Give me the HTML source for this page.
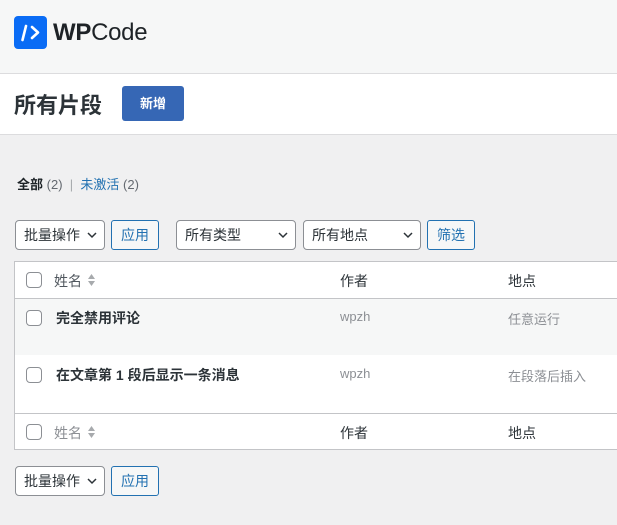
<!DOCTYPE html>
<html><head><meta charset="utf-8"><style>
*{box-sizing:border-box;margin:0;padding:0}
body{width:617px;height:525px;overflow:hidden;background:#f0f0f1;font-family:"Liberation Sans","Noto Sans CJK SC",sans-serif;font-size:13px;color:#3c434a;position:relative}
.abs{position:absolute}
.top{left:0;top:0;width:617px;height:74px;background:#f6f7f7;border-bottom:1px solid #dcdcde}
.band{left:0;top:74px;width:617px;height:61px;background:#fff;border-bottom:1px solid #dcdcde}
.sel{position:absolute;height:30px;border:1px solid #8c8f94;border-radius:4px;background:#fff;font-size:14px;color:#2c3338;line-height:28px;padding-left:8px}
.sel svg{position:absolute;right:7px;top:10px}
.btn{position:absolute;height:30px;border:1px solid #2271b1;border-radius:3px;background:#f6f7f7;color:#2271b1;font-size:14px;line-height:28px;text-align:center}
.cb{position:absolute;width:16px;height:16px;border:1px solid #8c8f94;border-radius:4px;background:#fff}
.tbl{left:14px;top:261px;width:610px;height:189px;border:1px solid #c3c4c7;background:#fff}
.t{position:absolute;white-space:nowrap}
</style></head><body>
<div class="abs top"></div>
<svg class="abs" style="left:14px;top:16px" width="33" height="33" viewBox="0 0 33 33"><rect width="33" height="33" rx="4" fill="#0a6cf5"/><path d="M12 10 L8.5 24" stroke="#fff" stroke-width="2.6" stroke-linecap="round"/><path d="M18 11 L24 16.5 L18 22" stroke="#fff" stroke-width="2.6" fill="none" stroke-linecap="round" stroke-linejoin="round"/></svg>
<div class="t" style="left:53px;top:17px;font-size:24px;color:#1e2327;line-height:32px;letter-spacing:-0.3px"><b>WP</b>Code</div>
<div class="abs band"></div>
<div class="t" style="left:14px;top:92px;font-size:22px;font-weight:bold;color:#2c3338;line-height:28px">所有片段</div>
<div class="abs" style="left:122px;top:86px;width:62px;height:35px;background:#3667b5;border-radius:3px;color:#fff;font-size:13px;font-weight:bold;text-align:center;line-height:35px">新增</div>
<div class="t" style="left:17px;top:176px;line-height:18px;font-size:13px"><b style="color:#1d2327">全部</b> <span style="color:#646970">(2)</span> <span style="color:#a7aaad">&nbsp;|&nbsp;</span> <span style="color:#2271b1">未激活</span> <span style="color:#646970">(2)</span></div>
<div class="sel" style="left:15px;top:220px;width:90px">批量操作<svg width="10" height="8" viewBox="0 0 10 8"><path d="M1 2 L5 6 L9 2" stroke="#2c3338" stroke-width="1.5" fill="none"/></svg></div>
<div class="btn" style="left:111px;top:220px;width:48px">应用</div>
<div class="sel" style="left:176px;top:220px;width:120px">所有类型<svg width="10" height="8" viewBox="0 0 10 8"><path d="M1 2 L5 6 L9 2" stroke="#2c3338" stroke-width="1.5" fill="none"/></svg></div>
<div class="sel" style="left:303px;top:220px;width:118px">所有地点<svg width="10" height="8" viewBox="0 0 10 8"><path d="M1 2 L5 6 L9 2" stroke="#2c3338" stroke-width="1.5" fill="none"/></svg></div>
<div class="btn" style="left:427px;top:220px;width:48px">筛选</div>
<div class="abs tbl"></div>
<div class="abs" style="left:15px;top:298px;width:602px;height:1px;background:#c3c4c7"></div>
<div class="abs" style="left:15px;top:299px;width:602px;height:56px;background:#f6f7f7"></div>
<div class="abs" style="left:15px;top:413px;width:602px;height:1px;background:#c3c4c7"></div>
<div class="cb" style="left:26px;top:272px"></div>
<div class="t" style="left:54px;top:271px;font-size:14px;color:#50575e">姓名</div>
<svg class="abs" style="left:87px;top:272px" width="9" height="16" viewBox="0 0 9 16"><path d="M1 7 L4.5 2 L8 7Z M1 9 L4.5 14 L8 9Z" fill="#a7aaad"/></svg>
<div class="t" style="left:340px;top:271px;font-size:14px;color:#2c3338">作者</div>
<div class="t" style="left:508px;top:271px;font-size:14px;color:#2c3338">地点</div>
<div class="cb" style="left:26px;top:310px"></div>
<div class="t" style="left:56px;top:308px;font-size:14px;font-weight:bold;color:#2c3338">完全禁用评论</div>
<div class="t" style="left:340px;top:309px;font-size:13px;color:#8c8f94">wpzh</div>
<div class="t" style="left:508px;top:309px;font-size:13px;color:#8c8f94">任意运行</div>
<div class="cb" style="left:26px;top:367px"></div>
<div class="t" style="left:56px;top:365px;font-size:14px;font-weight:bold;color:#2c3338">在文章第 1 段后显示一条消息</div>
<div class="t" style="left:340px;top:366px;font-size:13px;color:#8c8f94">wpzh</div>
<div class="t" style="left:508px;top:366px;font-size:13px;color:#8c8f94">在段落后插入</div>
<div class="cb" style="left:26px;top:424px"></div>
<div class="t" style="left:54px;top:423px;font-size:14px;color:#8c8f94">姓名</div>
<svg class="abs" style="left:87px;top:424px" width="9" height="16" viewBox="0 0 9 16"><path d="M1 7 L4.5 2 L8 7Z M1 9 L4.5 14 L8 9Z" fill="#a7aaad"/></svg>
<div class="t" style="left:340px;top:423px;font-size:14px;color:#2c3338">作者</div>
<div class="t" style="left:508px;top:423px;font-size:14px;color:#2c3338">地点</div>
<div class="sel" style="left:15px;top:466px;width:90px">批量操作<svg width="10" height="8" viewBox="0 0 10 8"><path d="M1 2 L5 6 L9 2" stroke="#2c3338" stroke-width="1.5" fill="none"/></svg></div>
<div class="btn" style="left:111px;top:466px;width:48px">应用</div>
</body></html>
